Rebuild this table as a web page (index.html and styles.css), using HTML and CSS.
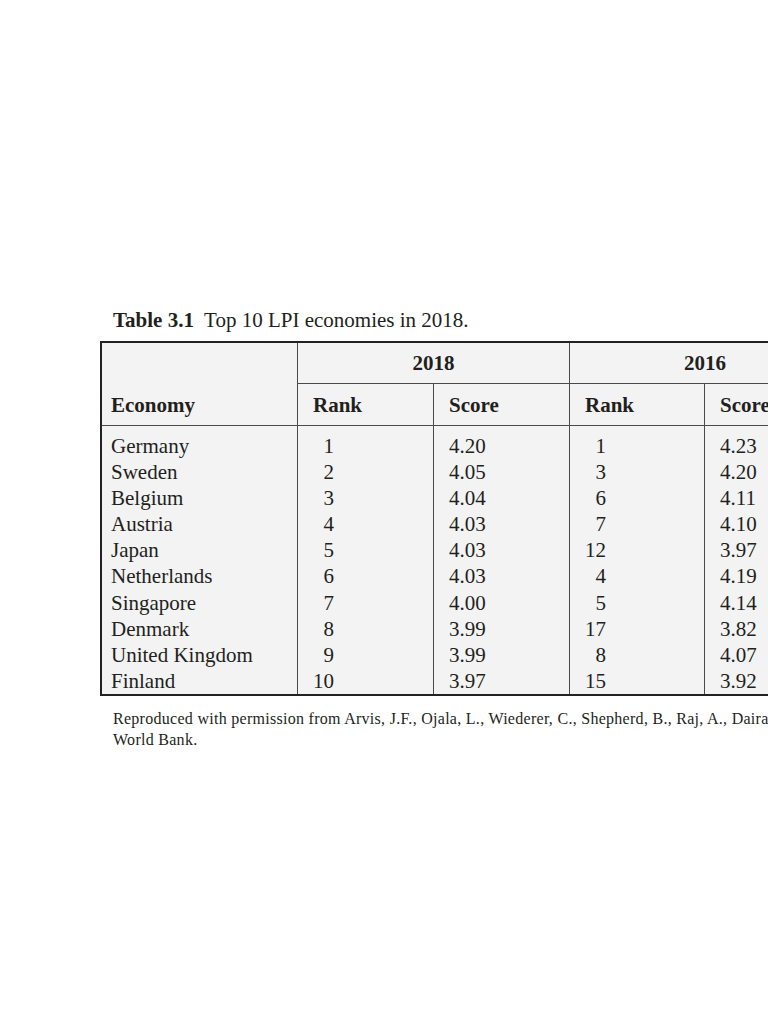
FILE: index.html
```html
<!DOCTYPE html>
<html lang="en">
<head>
<meta charset="utf-8">
<title>Table 3.1 Top 10 LPI economies in 2018</title>
<link rel="stylesheet" href="styles.css">
</head>
<body>
<div class="page">
  <p class="caption"><span class="label">Table 3.1</span>&nbsp; Top 10 LPI economies in 2018.</p>
  <table class="lpi">
    <colgroup>
      <col class="c-econ">
      <col class="c-num">
      <col class="c-num">
      <col class="c-num2">
      <col class="c-num">
    </colgroup>
    <thead>
      <tr class="years">
        <th class="econ" rowspan="2">Economy</th>
        <th class="year sep" colspan="2">2018</th>
        <th class="year sep" colspan="2">2016</th>
      </tr>
      <tr class="subs">
        <th class="sub sep">Rank</th>
        <th class="sub sep">Score</th>
        <th class="sub sep">Rank</th>
        <th class="sub sep">Score</th>
      </tr>
    </thead>
    <tbody>
      <tr class="first"><td class="name">Germany</td><td class="sep"><span class="rk">1</span></td><td class="sep sc">4.20</td><td class="sep"><span class="rk">1</span></td><td class="sep sc">4.23</td></tr>
      <tr><td class="name">Sweden</td><td class="sep"><span class="rk">2</span></td><td class="sep sc">4.05</td><td class="sep"><span class="rk">3</span></td><td class="sep sc">4.20</td></tr>
      <tr><td class="name">Belgium</td><td class="sep"><span class="rk">3</span></td><td class="sep sc">4.04</td><td class="sep"><span class="rk">6</span></td><td class="sep sc">4.11</td></tr>
      <tr><td class="name">Austria</td><td class="sep"><span class="rk">4</span></td><td class="sep sc">4.03</td><td class="sep"><span class="rk">7</span></td><td class="sep sc">4.10</td></tr>
      <tr><td class="name">Japan</td><td class="sep"><span class="rk">5</span></td><td class="sep sc">4.03</td><td class="sep"><span class="rk">12</span></td><td class="sep sc">3.97</td></tr>
      <tr><td class="name">Netherlands</td><td class="sep"><span class="rk">6</span></td><td class="sep sc">4.03</td><td class="sep"><span class="rk">4</span></td><td class="sep sc">4.19</td></tr>
      <tr><td class="name">Singapore</td><td class="sep"><span class="rk">7</span></td><td class="sep sc">4.00</td><td class="sep"><span class="rk">5</span></td><td class="sep sc">4.14</td></tr>
      <tr><td class="name">Denmark</td><td class="sep"><span class="rk">8</span></td><td class="sep sc">3.99</td><td class="sep"><span class="rk">17</span></td><td class="sep sc">3.82</td></tr>
      <tr><td class="name">United Kingdom</td><td class="sep"><span class="rk">9</span></td><td class="sep sc">3.99</td><td class="sep"><span class="rk">8</span></td><td class="sep sc">4.07</td></tr>
      <tr><td class="name">Finland</td><td class="sep"><span class="rk">10</span></td><td class="sep sc">3.97</td><td class="sep"><span class="rk">15</span></td><td class="sep sc">3.92</td></tr>
    </tbody>
  </table>
  <p class="note">Reproduced with permission from Arvis, J.F., Ojala, L., Wiederer, C., Shepherd, B., Raj, A., Dairabayev, K., Kiiski, T., 2018. Connecting to Compete 2018: Trade Logistics in the Global Economy. The<br>World Bank.</p>
</div>
</body>
</html>
```

FILE: styles.css
```css
html, body {
  margin: 0;
  padding: 0;
  background: #ffffff;
  overflow: hidden;
}

body {
  font-family: "Liberation Serif", "Times New Roman", serif;
  color: #231f20;
}

.page {
  padding: 307px 0 0 100px;
  width: 760px;
}

.caption {
  margin: 0 0 8px 13px;
  font-size: 21px;
  line-height: 26px;
  white-space: nowrap;
}

.caption .label {
  font-weight: bold;
}

.lpi {
  border-collapse: separate;
  border-spacing: 0;
  border: 2px solid #222;
  background: #f3f3f3;
  table-layout: fixed;
  width: 740px;
  font-size: 21px;
}

.c-econ { width: 195px; }
.c-num { width: 136px; }
.c-num2 { width: 135px; }

.lpi th {
  font-weight: bold;
  text-align: left;
  padding: 0 0 0 15px;
}

.lpi .sep {
  border-left: 1px solid #4a4a4a;
}

.years th {
  height: 40px;
}

.lpi .years .year {
  text-align: center;
  padding: 0;
  border-bottom: 1px solid #4a4a4a;
  vertical-align: middle;
  line-height: 26px;
}

.lpi .econ {
  padding-left: 9px;
  vertical-align: bottom;
  border-bottom: 1px solid #4a4a4a;
  line-height: 26px;
  padding-bottom: 7px;
}

.subs th {
  height: 34px;
  padding-bottom: 7px;
  vertical-align: bottom;
  border-bottom: 1px solid #4a4a4a;
  line-height: 26px;
}

.lpi td {
  padding: 0 0 0 15px;
  line-height: 26.1px;
  height: 26.1px;
  white-space: nowrap;
  font-weight: normal;
}

.lpi td.name {
  padding-left: 9px;
}

.lpi tr.first td {
  padding-top: 7px;
}

.rk {
  display: inline-block;
  width: 21px;
  text-align: right;
}

.note {
  margin: 12px 0 0 13px;
  font-size: 16px;
  line-height: 21px;
  letter-spacing: 0.28px;
  white-space: nowrap;
}
```
